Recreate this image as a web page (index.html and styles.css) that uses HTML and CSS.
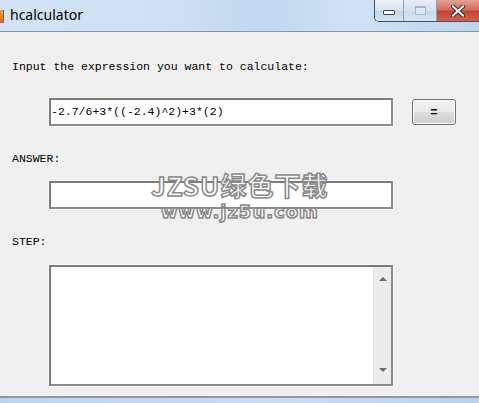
FILE: index.html
```html
<!DOCTYPE html>
<html lang="en">
<head>
    <meta charset="UTF-8">
    <title>hcalculator</title>
    <link rel="stylesheet" href="styles.css">
</head>
<body>
<div class="window">
    <div class="titlebar">
        <div class="app-icon"></div>
        <span class="title-text">hcalculator</span>
        <div class="caption-buttons">
            <div class="caption-btn minimize"><span class="min-glyph"></span></div>
            <div class="caption-btn maximize"><span class="max-glyph"></span></div>
            <div class="caption-btn close">
                <svg viewBox="0 0 14 12" width="14" height="12">
                    <path d="M2 1.5L12 10.5M12 1.5L2 10.5" stroke="#3b2a28" stroke-width="4" stroke-linecap="square"/>
                    <path d="M2 1.5L12 10.5M12 1.5L2 10.5" stroke="#ffffff" stroke-width="2" stroke-linecap="square"/>
                </svg>
            </div>
        </div>
    </div>

    <div class="content">
        <p class="label first">Input the expression you want to calculate:</p>
        <div class="input-row">
            <div class="field">-2.7/6+3*((-2.4)^2)+3*(2)</div>
            <button class="eq-button">=</button>
        </div>

        <p class="label">ANSWER:</p>
        <div class="field answer"></div>

        <p class="label">STEP:</p>
        <div class="field step">
            <div class="step-text"></div>
            <div class="scrollbar">
                <span class="arrow up"></span>
                <span class="arrow down"></span>
            </div>
        </div>

        <div class="watermark">
            <div class="wm-big">JZSU绿色下载</div>
            <div class="wm-small">www.jz5u.com</div>
        </div>
    </div>

    <div class="frame-bottom"></div>
</div>
</body>
</html>
```

FILE: styles.css
```css
* {
    box-sizing: border-box;
    margin: 0;
    padding: 0;
}

body {
    width: 479px;
    height: 403px;
    overflow: hidden;
    background-color: #f0f0f0;
    font-family: "Liberation Mono", monospace;
    color: #000000;
}

.window {
    height: 403px;
    display: flex;
    flex-direction: column;
}

/* Title bar */
.titlebar {
    height: 32px;
    flex: none;
    display: flex;
    align-items: flex-start;
    background: linear-gradient(90deg, #d3e3f5 0%, #cfe0f3 35%, #c2d8f0 55%, #d0e2f5 75%, #bcd4ee 100%);
    border-bottom: 1px solid #8596aa;
}

.app-icon {
    width: 4px;
    height: 13px;
    margin-top: 10px;
    background: linear-gradient(180deg, #f5a623, #d9661a);
    border-right: 1px solid #3a6fb0;
}

.title-text {
    margin-left: 6px;
    margin-top: 5px;
    font-family: "Noto Sans", sans-serif;
    font-size: 14px;
    color: #000000;
    line-height: 20px;
}

.caption-buttons {
    margin-left: auto;
    display: flex;
    height: 22px;
    border: 1px solid #3e4f66;
    border-top: none;
    border-right: none;
    border-radius: 0 0 0 5px;
    overflow: hidden;
}

.caption-btn {
    height: 21px;
    display: flex;
    align-items: center;
    justify-content: center;
}

.minimize {
    width: 29px;
    background: linear-gradient(180deg, #eef3f9 0%, #d6e2ef 50%, #c3d3e6 51%, #d8e5f3 100%);
    border-right: 1px solid #8fa0b5;
}

.min-glyph {
    width: 12px;
    height: 5px;
    margin-top: 4px;
    background-color: #ffffff;
    border: 1px solid #3a4a5c;
    border-radius: 1px;
}

.maximize {
    width: 33px;
    background: linear-gradient(180deg, #e6eef7 0%, #d3e0ee 50%, #c9d9eb 51%, #d6e4f2 100%);
    border-right: 1px solid #8fa0b5;
}

.max-glyph {
    width: 11px;
    height: 9px;
    border: 1px solid #a7b7ca;
    border-top-width: 2px;
    background-color: #dde7f2;
}

.close {
    width: 42px;
    background: linear-gradient(180deg, #e6a195 0%, #d26d5c 45%, #c24431 55%, #d4624c 100%);
}

/* Client area */
.content {
    flex: 1;
    padding: 28px 0 0 12px;
    position: relative;
}

.label {
    font-size: 11.5px;
    line-height: 14px;
    white-space: nowrap;
    margin-top: 26px;
}

.label.first {
    margin-top: 0;
}

.input-row {
    display: flex;
    align-items: flex-start;
    margin-top: 24px;
}

.field {
    margin-left: 37px;
    width: 344px;
    height: 28px;
    background-color: #ffffff;
    border: 2px solid #7b7b7b;
    border-right-color: #8c8c8c;
    border-bottom-color: #8c8c8c;
    box-shadow: 0 0 0 1px #fbfbfb;
    font-size: 11.5px;
    line-height: 24px;
    white-space: nowrap;
}

.eq-button {
    margin-left: 19px;
    margin-top: 1px;
    width: 44px;
    height: 26px;
    border: 1px solid #707070;
    border-radius: 3px;
    background: linear-gradient(180deg, #f2f2f2 0%, #ebebeb 50%, #dddddd 51%, #cfcfcf 100%);
    box-shadow: inset 0 0 0 1px #fcfcfc;
    font-family: "Liberation Sans", sans-serif;
    font-size: 12px;
    font-weight: bold;
    color: #000000;
}

.answer {
    margin-top: 15px;
}

.step {
    margin-top: 16px;
    height: 121px;
    display: flex;
}

.step-text {
    flex: 1;
}

.scrollbar {
    width: 18px;
    background-color: #ececec;
    border-left: 1px solid #e2e2e2;
    display: flex;
    flex-direction: column;
    align-items: center;
    justify-content: space-between;
    padding: 10px 0 12px;
}

.arrow {
    width: 0;
    height: 0;
    border-left: 4px solid transparent;
    border-right: 4px solid transparent;
}

.arrow.up {
    border-bottom: 4px solid #6d6d6d;
}

.arrow.down {
    border-top: 4px solid #6d6d6d;
}

/* Download-site stamp laid over the form */
.watermark {
    position: absolute;
    left: 151px;
    top: 140px;
    text-align: center;
    color: #ffffff;
    -webkit-text-stroke: 1.5px #8a8a8a;
    font-family: "Noto Sans CJK SC", "DejaVu Sans", sans-serif;
    font-weight: bold;
    pointer-events: none;
}

.wm-big {
    font-size: 26px;
    line-height: 26px;
    letter-spacing: 1px;
}

.wm-small {
    margin-top: 4px;
    font-family: "DejaVu Sans", sans-serif;
    font-size: 18px;
    line-height: 20px;
    letter-spacing: 1px;
}

/* Window frame bottom */
.frame-bottom {
    height: 7px;
    flex: none;
    border-top: 2px solid #8e9aa8;
    background: linear-gradient(90deg, #bcd5ef, #c9ddf3 60%, #b9d2ee);
}
```
